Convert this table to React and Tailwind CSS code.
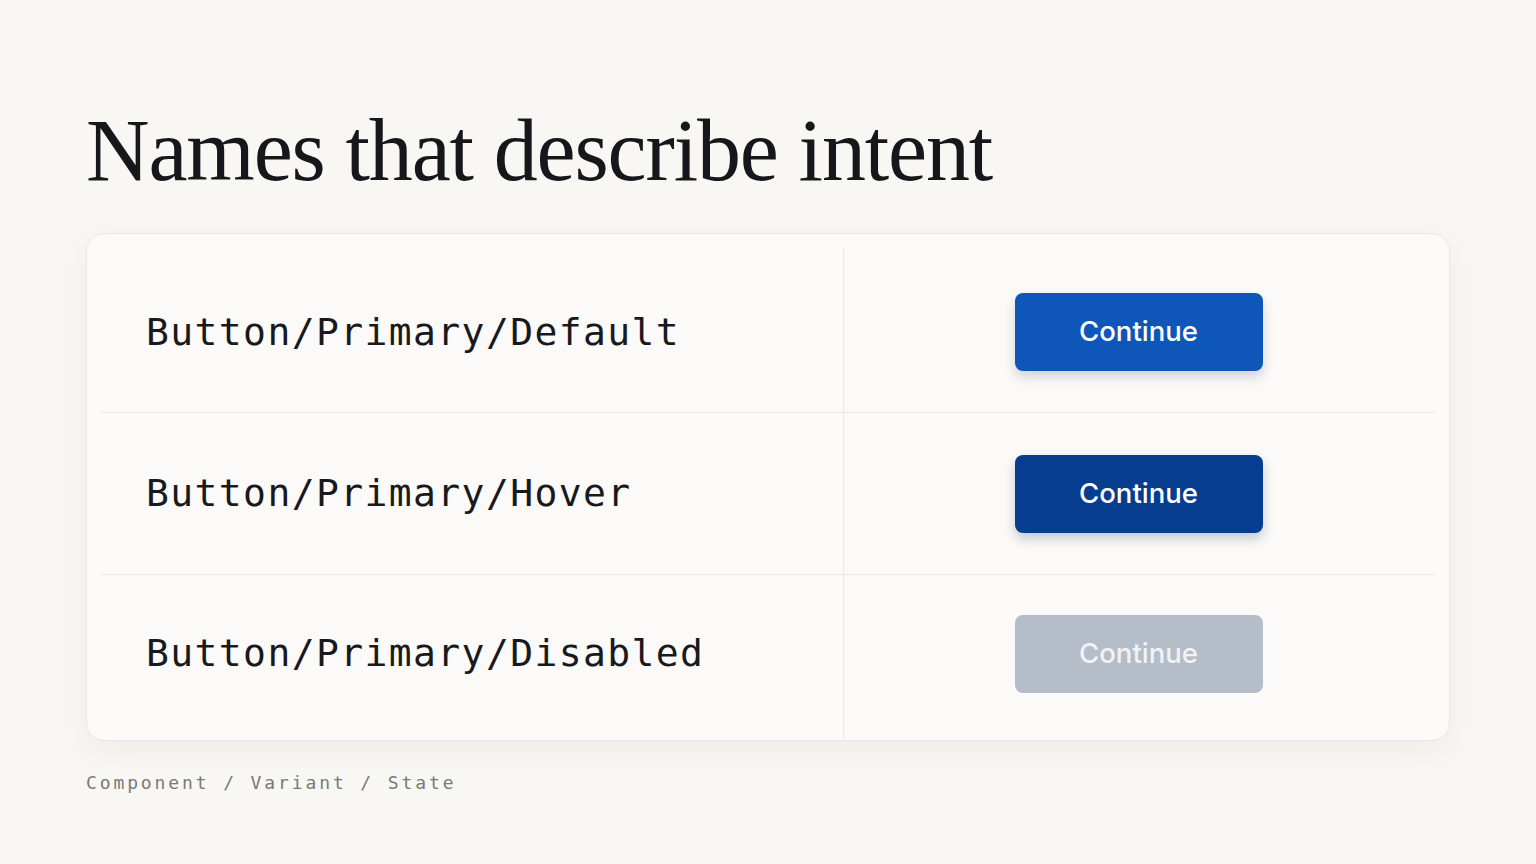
import React from 'react';

const rows = [
  { name: 'Button/Primary/Default', state: 'default', h: 'h-[178px] pt-[14px]', pad: 'pt-[4px]' },
  { name: 'Button/Primary/Hover', state: 'hover', h: 'h-[162px]', pad: '' },
  { name: 'Button/Primary/Disabled', state: 'disabled', h: 'flex-1', pad: 'pb-[8px]' },
];

const buttonStyles = {
  default: 'bg-[#0f56b9] text-white shadow-[0_6px_12px_rgba(15,40,90,0.18)]',
  hover: 'bg-[#063d8f] text-white shadow-[0_6px_12px_rgba(10,30,70,0.22)]',
  disabled: 'bg-[#b5bdc8] text-[#f1f3f6]',
};

const App = () => {
  return (
    <div className="w-[1536px] h-[864px] bg-[#f8f7f3] px-[86px] pt-[107px] overflow-hidden">
      <h1 className="font-['Liberation_Serif',serif] text-[88px] leading-none tracking-[-0.013em] text-[#15171b]">
        Names that describe intent
      </h1>

      <div className="mt-[38px] h-[508px] rounded-[18px] border border-[#ebe8e2] bg-[#fbfaf8] shadow-[0_10px_30px_rgba(80,70,50,0.06)] flex flex-col">
        {rows.map((row, i) => (
          <div
            key={row.name}
            className={'flex mx-[14px] ' + (i > 0 ? 'border-t border-[#ebe9e4] ' : '') + row.h}
          >
            <div
              className={
                "w-[743px] flex items-center pl-[45px] border-r border-[#ebe9e4] font-['DejaVu_Sans_Mono',monospace] text-[38px] tracking-[1.4px] text-[#17191d] " +
                row.pad
              }
            >
              {row.name}
            </div>
            <div className={'flex-1 flex items-center justify-center pr-[2px] ' + row.pad}>
              <button
                className={
                  'w-[248px] h-[78px] rounded-[8px] font-[Inter,sans-serif] text-[27.5px] font-medium ' +
                  buttonStyles[row.state]
                }
              >
                Continue
              </button>
            </div>
          </div>
        ))}
      </div>

      <p className="mt-[28px] font-['DejaVu_Sans_Mono',monospace] text-[18px] tracking-[0.16em] text-[#7a7a78]">
        Component / Variant / State
      </p>
    </div>
  );
};

export default App;
